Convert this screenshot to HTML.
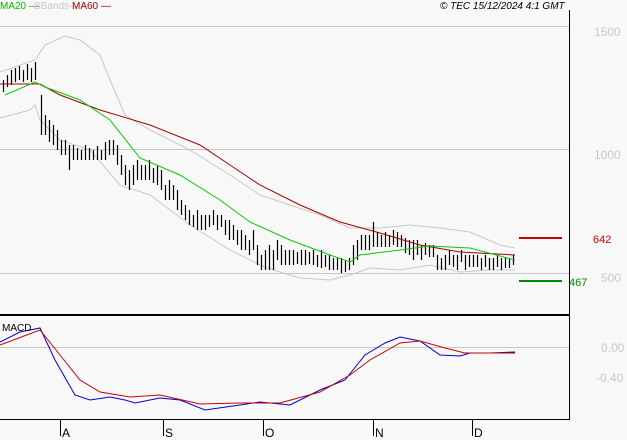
<!DOCTYPE html><html><head><style>
body{margin:0;background:#f8f8f8;width:627px;height:440px;overflow:hidden;font-family:"Liberation Sans",sans-serif}
svg{position:absolute;left:0;top:0}
</style></head><body>
<svg width="627" height="440" viewBox="0 0 627 440" font-family="Liberation Sans, sans-serif" font-size="11">
<rect width="627" height="440" fill="#f8f8f8"/>
<g stroke="#c8c8c8" stroke-width="1">
<line x1="0" y1="26.5" x2="569" y2="26.5"/><line x1="0" y1="149.5" x2="569" y2="149.5"/><line x1="0" y1="273.5" x2="569" y2="273.5"/><line x1="0" y1="347.5" x2="569" y2="347.5"/>
</g>
<line x1="569.5" y1="10" x2="569.5" y2="420" stroke="#000"/>
<line x1="0" y1="315" x2="570" y2="315" stroke="#000" stroke-width="2"/>
<line x1="0" y1="419.5" x2="570" y2="419.5" stroke="#000"/>
<g stroke="#000"><line x1="60.5" y1="419" x2="60.5" y2="436"/><line x1="163.5" y1="419" x2="163.5" y2="436"/><line x1="263.5" y1="419" x2="263.5" y2="436"/><line x1="373.5" y1="419" x2="373.5" y2="436"/><line x1="472.5" y1="419" x2="472.5" y2="436"/></g>
<g font-size="12"><text x="62" y="437">A</text><text x="165" y="437">S</text><text x="265" y="437">O</text><text x="375" y="437">N</text><text x="474" y="437">D</text></g>
<g fill="#c8c8c8" font-size="12"><text x="594" y="36">1500</text><text x="594" y="159">1000</text><text x="601" y="282">500</text><text x="601" y="352">0.00</text><text x="596" y="382">-0.40</text></g>
<text x="0" y="9" fill="#00bb00" font-size="10">MA20 —</text><text x="34" y="9" fill="#c8c8c8" font-size="10">BBands—</text><text x="72" y="9" fill="#990000" font-size="10">MA60 —</text>
<text x="440" y="9" font-size="10" font-style="italic">© TEC 15/12/2024 4:1 GMT</text>
<polyline fill="none" stroke="#c8c8c8" points="0,72 35,60 45,45 65,36 80,40 100,55 110,80 125,115 150,130 190,150 230,175 260,195 290,205 320,215 350,228 380,228 410,225 440,228 470,232 500,245 515,248"/>
<polyline fill="none" stroke="#c8c8c8" points="0,118 30,110 35,105 40,120 60,140 90,150 120,185 150,195 190,225 230,250 260,265 280,272 300,278 330,280 350,275 370,268 400,270 430,265 460,272 490,270 515,270"/>
<path transform="translate(0.5,0)" fill="none" stroke="#000" stroke-width="1.2" d="M3 80v12M7 75v12M11 70v15M15 68v14M19 66v14M23 70v12M27 64v16M31 68v14M35 62v18M41 95v40M45 115v20M49 120v22M53 125v20M57 130v20M61 140v15M65 140v15M69 145v25M73 145v15M77 148v12M81 150v10M85 145v15M89 148v12M93 150v10M97 146v14M101 150v10M105 142v18M109 140v15M113 140v15M117 145v20M121 155v20M125 165v20M129 170v20M133 165v20M137 160v20M141 165v15M145 165v15M149 160v20M153 168v15M157 165v20M161 170v20M165 185v15M169 180v20M173 185v15M177 190v20M181 200v15M185 205v15M189 210v15M193 215v12M197 210v20M201 215v15M205 215v15M209 215v12M213 210v15M217 215v15M221 215v12M225 220v15M229 220v20M233 225v15M237 230v15M241 230v20M245 235v15M249 240v15M253 230v20M257 245v20M261 255v15M265 250v20M269 245v25M273 250v20M277 240v20M281 245v20M285 250v15M289 250v15M293 250v15M297 252v12M301 250v15M305 250v15M309 252v12M313 250v15M317 255v12M321 250v18M325 255v12M329 255v15M333 258v12M337 258v12M341 258v15M345 260v12M349 258v12M353 245v20M357 240v20M361 235v15M365 235v15M369 235v15M373 222v25M377 232v15M381 235v12M385 232v15M389 235v12M393 230v15M397 232v15M401 235v12M405 238v15M409 240v15M413 240v20M417 240v15M421 245v15M425 243v12M429 245v12M433 245v12M437 255v15M441 258v12M445 255v15M449 250v15M453 255v12M457 255v15M461 250v12M465 255v15M469 255v12M473 255v12M477 255v12M481 258v12M485 255v12M489 258v12M493 258v12M497 255v12M501 258v12M505 258v10M509 258v10M513 255v10"/>
<polyline fill="none" stroke="#aa0000" points="0,84 40,84 60,95 100,110 150,125 200,145 230,165 260,185 300,205 340,222 380,233 420,245 460,252 515,255"/>
<polyline fill="none" stroke="#00cc00" points="5,95 35,82 45,87 80,100 110,120 140,158 180,175 220,200 250,222 290,240 330,255 350,262 360,255 400,250 430,246 470,248 515,260"/>
<line x1="519" y1="238" x2="562" y2="238" stroke="#cc0000" stroke-width="2"/>
<text x="593" y="243" fill="#cc0000">642</text>
<line x1="519" y1="281" x2="562" y2="281" stroke="#008800" stroke-width="2"/>
<text x="569" y="286" fill="#008800">467</text>
<polyline fill="none" stroke="#0000cc" points="0,342 20,332 40,328 55,360 75,395 90,400 110,397 125,400 135,403 160,398 180,400 205,410 240,405 260,402 290,405 320,390 345,380 365,355 385,343 400,337 420,341 440,355 460,356 470,353 490,353 515,352"/>
<polyline fill="none" stroke="#cc0000" points="0,345 40,330 60,355 80,380 100,392 130,397 160,395 200,404 240,403 280,403 320,392 350,375 370,360 400,343 420,341 445,348 465,353 515,353"/>
<text x="2" y="331" font-size="10">MACD</text>
</svg>
</body></html>
